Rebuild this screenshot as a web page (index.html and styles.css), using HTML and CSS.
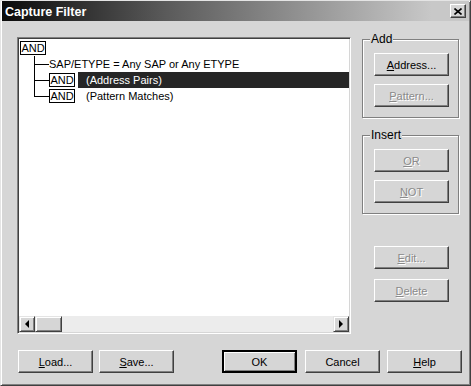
FILE: index.html
```html
<!DOCTYPE html>
<html>
	<head>
		<meta charset="UTF-8">
		<title>Capture Filter</title>
		<link rel="stylesheet" href="styles.css">
	</head>
	<body>
		<section class="window">
			<header class="titlebar">
				<span class="title">Capture Filter</span>
				<a href="javascript:;" class="close">
					<svg width="8" height="7" viewBox="0 0 8 7"><path d="M0.5 0.5 L7.5 6.5 M7.5 0.5 L0.5 6.5" stroke="#000" stroke-width="1.6" fill="none"/></svg>
				</a>
			</header>
			<div class="content">
				<div class="pane">
					<div class="tree">
						<div class="row"><span class="op">AND</span></div>
						<ul class="children">
							<li class="row"><span class="label">SAP/ETYPE = Any SAP or Any ETYPE</span></li>
							<li class="row"><span class="op">AND</span><span class="label sel">(Address Pairs)</span></li>
							<li class="row"><span class="op">AND</span><span class="label pad">(Pattern Matches)</span></li>
						</ul>
					</div>
					<div class="hscroll">
						<a href="javascript:;" class="arrow left"></a>
						<span class="thumb"></span>
						<span class="track"></span>
						<a href="javascript:;" class="arrow right"></a>
					</div>
				</div>
				<div class="side">
					<fieldset class="group">
						<legend>Add</legend>
						<a href="javascript:;" class="btn"><u>A</u>ddress...</a>
						<a href="javascript:;" class="btn off"><u>P</u>attern...</a>
					</fieldset>
					<fieldset class="group insert">
						<legend>Insert</legend>
						<a href="javascript:;" class="btn off"><u>O</u>R</a>
						<a href="javascript:;" class="btn off"><u>N</u>OT</a>
					</fieldset>
					<div class="actions">
						<a href="javascript:;" class="btn off"><u>E</u>dit...</a>
						<a href="javascript:;" class="btn off"><u>D</u>elete</a>
					</div>
				</div>
			</div>
			<footer class="footer">
				<a href="javascript:;" class="btn"><u>L</u>oad...</a>
				<a href="javascript:;" class="btn save"><u>S</u>ave...</a>
				<a href="javascript:;" class="btn ok">OK</a>
				<a href="javascript:;" class="btn cancel">Cancel</a>
				<a href="javascript:;" class="btn help"><u>H</u>elp</a>
			</footer>
		</section>
	</body>
</html>
```

FILE: styles.css
```css
body{
	margin: 0;
	background: #d6d6d6;
	font-family: "Liberation Sans", Arial, sans-serif;
	font-size: 11px;
	color: #000;
}
.window{
	width: 471px;
	height: 386px;
	box-sizing: border-box;
	background: #d6d6d6;
	border: 1px solid;
	border-color: #e4e4e4 #404040 #404040 #e4e4e4;
	box-shadow: inset 1px 1px #fff, inset -1px -1px #808080;
}
.titlebar{
	height: 20px;
	margin: 0 1px;
	display: flex;
	align-items: center;
	background: linear-gradient(to right, #0a0a0a, #5a5a5a 35%, #c8c8c8 92%);
}
.title{
	flex: 1;
	padding: 1px 0 0 3px;
	color: #fff;
	font-weight: bold;
	font-size: 12.5px;
}
.close{
	width: 16px;
	height: 14px;
	margin-right: 3px;
	box-sizing: border-box;
	display: flex;
	align-items: center;
	justify-content: center;
	background: #d6d6d6;
	border: 1px solid;
	border-color: #fff #404040 #404040 #fff;
	box-shadow: inset -1px -1px #808080;
}
.content{
	display: flex;
	align-items: flex-start;
	padding: 16px 0 0 16px;
}
.pane{
	width: 334px;
	height: 297px;
	box-sizing: border-box;
	display: flex;
	flex-direction: column;
	border: 1px solid;
	border-color: #808080 #fff #fff #808080;
	box-shadow: inset 1px 1px #404040, inset -1px -1px #d6d6d6;
	padding: 1px;
}
.tree{
	flex: 1;
	background: #fff;
	padding: 1px 0 0 1px;
}
.row{
	height: 16px;
	display: flex;
	align-items: center;
	white-space: nowrap;
}
.op{
	width: 26px;
	height: 14px;
	box-sizing: border-box;
	border: 1px solid #000;
	line-height: 12px;
	text-align: center;
}
.children{
	list-style: none;
	margin: 0 0 0 14px;
	padding: 0;
}
.children li{
	position: relative;
	padding-left: 15px;
}
.children li:before{
	content: "";
	position: absolute;
	left: 0;
	top: 0;
	width: 14px;
	height: 8px;
	border-left: 1px solid #000;
	border-bottom: 1px solid #000;
}
.children li:after{
	content: "";
	position: absolute;
	left: 0;
	top: 0;
	bottom: 0;
	border-left: 1px solid #000;
}
.children li:last-child:after{
	display: none;
}
.label{
	line-height: 16px;
}
.sel{
	flex: 1;
	margin-left: 3px;
	padding-left: 8px;
	background: #262626;
	color: #fff;
}
.pad{
	padding-left: 11px;
}
.hscroll{
	height: 16px;
	display: flex;
	background: #ececec;
}
.arrow,.thumb{
	width: 16px;
	height: 16px;
	box-sizing: border-box;
	display: flex;
	align-items: center;
	justify-content: center;
	background: #d6d6d6;
	border: 1px solid;
	border-color: #e4e4e4 #404040 #404040 #e4e4e4;
	box-shadow: inset 1px 1px #fff, inset -1px -1px #808080;
}
.thumb{
	width: 27px;
}
.track{
	flex: 1;
}
.arrow:before{
	content: "";
	border-top: 4px solid transparent;
	border-bottom: 4px solid transparent;
}
.left:before{
	border-right: 4px solid #000;
}
.right:before{
	border-left: 4px solid #000;
}
.side{
	width: 97px;
	margin: -4px 0 0 11px;
}
.group{
	margin: 0;
	padding: 8px 0 10px 11px;
	border: 1px solid #808080;
	box-shadow: inset 1px 1px #fff, 1px 1px #fff;
	min-width: 0;
}
.group legend{
	padding: 0 1px;
	margin-left: -4px;
	line-height: 12px;
	font-size: 12px;
	background: #d6d6d6;
}
.insert{
	margin-top: 11px;
}
.btn{
	width: 75px;
	height: 23px;
	box-sizing: border-box;
	display: flex;
	align-items: center;
	justify-content: center;
	color: #000;
	text-decoration: none;
	background: #d6d6d6;
	border: 1px solid;
	border-color: #fff #404040 #404040 #fff;
	box-shadow: inset -1px -1px #808080;
}
.group .btn + .btn{
	margin-top: 8px;
}
.off{
	color: #8a8a8a;
	text-shadow: 1px 1px #fff;
}
.actions{
	margin: 32px 0 0 12px;
}
.actions .btn + .btn{
	margin-top: 10px;
}
.footer{
	display: flex;
	margin-top: 16px;
	padding-left: 17px;
}
.save{
	margin-left: 6px;
}
.ok{
	margin-left: 48px;
	border: 2px solid #000;
	box-shadow: inset 1px 1px #fff, inset -1px -1px #808080;
}
.cancel{
	margin-left: 8px;
}
.help{
	margin-left: 7px;
}
```
